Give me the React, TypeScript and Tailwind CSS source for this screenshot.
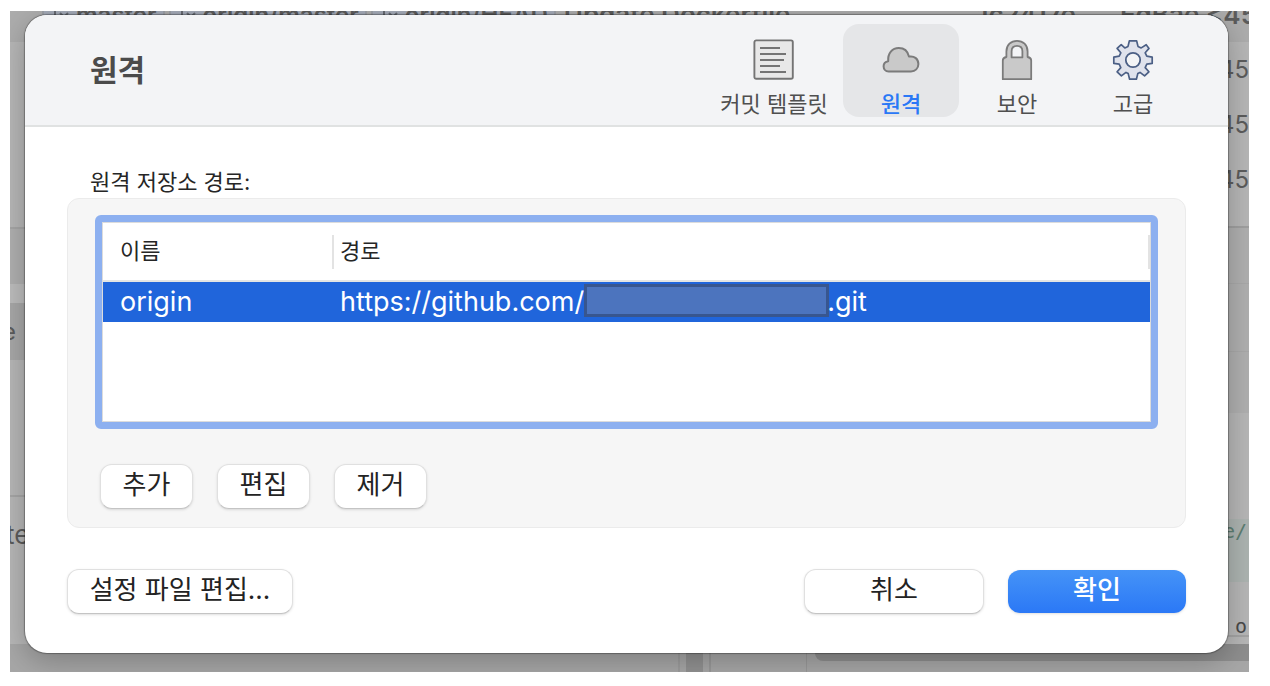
import { useState } from "react";
import type { ReactNode } from "react";

type Tab = { label: string; icon: ReactNode; width: string };

function TemplateIcon() {
  return (
    <svg width="42" height="42" viewBox="0 0 42 42" fill="none" stroke="#747474" aria-hidden="true">
      <rect x="1.4" y="1.4" width="38.4" height="38.4" rx="1.8" fill="#e8e8e8" strokeWidth="1.9" />
      <path d="M7 9h20M7 15h26M7 21h24M7 27h20M7 33h26" strokeWidth="2" />
    </svg>
  );
}

function CloudIcon() {
  return (
    <svg width="42" height="42" viewBox="0 0 42 42" aria-hidden="true">
      <path
        d="M8.6 32.4 C5.4 32.4 3.6 30 3.6 27.2 C3.6 24.6 5.4 22.6 8.2 22.2 C7.6 14.4 12.2 9 18.8 9 C24 9 27.8 12.2 29 17.6 C34.6 16.6 38.4 20.2 38.4 25 C38.4 29.4 35.2 32.4 31 32.4 Z"
        fill="#c9c9c9"
        stroke="#7b7b7b"
        strokeWidth="2"
        strokeLinejoin="round"
      />
    </svg>
  );
}

function LockIcon() {
  return (
    <svg width="42" height="42" viewBox="0 0 42 42" aria-hidden="true">
      <path
        d="M6.8 40.2V21.6Q6.8 18.6 10.4 18V12.4C10.4 5.9 15 1.8 21 1.8S31.6 5.9 31.6 12.4V18Q35.2 18.6 35.2 21.6V40.2Z"
        fill="#c9c9c9"
        stroke="#7b7b7b"
        strokeWidth="1.8"
        strokeLinejoin="round"
      />
      <path
        d="M15.6 18.4V12.2C15.6 8.9 17.8 6.8 21 6.8S26.4 8.9 26.4 12.2V18.4Z"
        fill="#f3f4f6"
        stroke="#7b7b7b"
        strokeWidth="1.8"
        strokeLinejoin="round"
      />
    </svg>
  );
}

function GearIcon() {
  return (
    <svg width="42" height="42" viewBox="0 0 42 42" aria-hidden="true">
      <path
        d="M17.4 1.8H24.6L26 7.4L29.2 8.9L34.2 5.7L37 9.4L33.2 13.8L34.8 17.2L40.2 18.2V24.4L34.8 25.2L33.2 28.6L36.9 32.8L32.6 36.9L28 33.4L25.8 34.6L24.4 40.2H17.6L16.2 34.6L14 33.4L9.4 36.9L5.1 32.8L8.8 28.6L7.2 25.2L1.8 24.4V18.2L7.2 17.2L8.8 13.8L5.1 9.4L9.2 5.7L12.8 8.9L16 7.4Z"
        fill="#dfe2ec"
        stroke="#4b5f85"
        strokeWidth="1.7"
        strokeLinejoin="round"
      />
      <circle cx="21" cy="21" r="7.2" fill="#f3f4f6" stroke="#4b5f85" strokeWidth="1.8" />
    </svg>
  );
}

const tabs: Tab[] = [
  { label: "커밋 템플릿", icon: <TemplateIcon />, width: "w-[138px]" },
  { label: "원격", icon: <CloudIcon />, width: "w-[116px]" },
  { label: "보안", icon: <LockIcon />, width: "w-[116px]" },
  { label: "고급", icon: <GearIcon />, width: "w-[116px]" },
];

function Branch({ name }: { name: string }) {
  return (
    <span className="flex h-6 items-center gap-1.5 border-x-2 border-[#9b9fa6] bg-[#a4abb8] px-1.5">
      <svg width="20" height="24" viewBox="0 0 20 24" fill="none" stroke="#666a72" strokeWidth="2" aria-hidden="true">
        <path d="M5 2v18M5 19c6 0 9-2 9-7" />
        <path d="M10 10l4 4 4-4" />
      </svg>
      {name}
    </span>
  );
}

/* The dimmed repository window that stays visible around the sheet. */
function RepositoryWindow() {
  return (
    <div
      aria-hidden="true"
      className="absolute inset-0 flex flex-col overflow-hidden bg-[#b7b7b7] text-2xl text-[#5c5c5c]"
    >
      <div className="flex h-[31px] shrink-0 items-start justify-between overflow-hidden bg-[#adadad] pl-8 leading-6 font-semibold whitespace-nowrap">
        <div className="-mt-2 flex gap-1">
          <Branch name="master" />
          <Branch name="origin/master" />
          <Branch name="origin/HEAD" />
          <span className="pl-1 text-[26px]">Update Dockerfile</span>
        </div>
        <div className="-mt-2 -mr-2 flex gap-11 text-[26px]">
          <span>1c2417e</span>
          <span>EdBae &lt;45</span>
        </div>
      </div>

      <div className="flex min-h-0 flex-1 justify-between">
        <div className="flex w-8 flex-col overflow-hidden">
          <div className="h-[187px] border-b-2 border-[#a6a6a6]" />
          <div className="h-[55px] bg-[#b0b0b0]" />
          <div className="h-[19px] bg-[#bdbdbd]" />
          <div className="flex h-[57px] items-center bg-[#a8a8a8]">
            <span className="-ml-2">e</span>
          </div>
          <div className="h-[137px] border-b-2 border-[#a6a6a6]" />
          <div className="flex h-[76px] items-center text-[26px]">
            <span className="-ml-1">te</span>
          </div>
        </div>

        <div className="flex w-9 flex-col overflow-hidden">
          <div className="flex h-[186px] flex-col items-end border-b-2 border-[#a0a0a0] leading-[55px]">
            <span>45</span>
            <span>45</span>
            <span>45</span>
          </div>
          <div className="h-[56px] border-b border-[#a9a9a9] bg-[#b0b0b0]" />
          <div className="h-[68px] border-b border-[#a9a9a9] bg-[#b0b0b0]" />
          <div className="h-[61px] bg-[#b0b0b0]" />
          <div className="h-[106px]" />
          <div className="h-[63px] bg-[#adb4b1] pr-0.5 text-right font-['DejaVu_Sans_Mono'] text-xl leading-6 text-[#5d7f73]">
            e/
          </div>
          <div className="h-[55px] border-b-2 border-[#a4a4a4] pr-0.5 text-right font-['DejaVu_Sans_Mono'] text-xl leading-[88px] text-[#4a4a4a]">
            o
          </div>
        </div>
      </div>

      <div className="flex h-7 shrink-0 bg-[#a7a7a7]">
        <div className="flex-1 border-r-2 border-[#9d9d9d]" />
        <div className="w-1.5" />
        <div className="w-[17px] bg-[#929292]" />
        <div className="w-2 border-r-2 border-[#999999]" />
        <div className="w-[96px] border-r border-[#999999]" />
        <div className="w-[442px] pl-2">
          <div className="h-[17px] rounded-bl-lg bg-[#8e8e8e]" />
        </div>
      </div>
    </div>
  );
}

function PushButton({ children, className = "" }: { children: ReactNode; className?: string }) {
  return (
    <button
      type="button"
      className={`h-[45px] rounded-xl border border-[#e0e0e0] border-b-[#c4c4c4] bg-white pb-1 text-[26px] leading-none text-[#232323] shadow-sm ${className}`}
    >
      {children}
    </button>
  );
}

export default function App() {
  const [active, setActive] = useState("원격");

  return (
    <div className="bg-white pt-[11px] pr-[21px] pb-[14px] pl-[10px] font-['Inter','Noto_Sans_CJK_KR',sans-serif]">
      <div className="relative overflow-hidden pt-1 pr-[21px] pb-[19px] pl-[15px]">
        <RepositoryWindow />

        <section
          role="dialog"
          aria-labelledby="sheet-title"
          className="relative overflow-hidden rounded-[22px] bg-white shadow-[0_0_1px_1px_rgba(0,0,0,0.3),0_8px_30px_rgba(0,0,0,0.25)]"
        >
          <header className="flex h-28 items-start justify-between border-b-2 border-[#e0e2e2] bg-[#f3f4f6] pt-[9px] pr-[37px] pl-[65px]">
            <h1 id="sheet-title" className="pt-6 text-[30px] leading-11 font-bold text-[#4b4b4b]">
              원격
            </h1>
            <nav className="flex">
              {tabs.map((tab) => (
                <button
                  key={tab.label}
                  type="button"
                  aria-pressed={active === tab.label}
                  onClick={() => setActive(tab.label)}
                  className={`flex h-[93px] flex-col items-center rounded-2xl pt-[15px] text-[22px] ${tab.width} ${
                    active === tab.label ? "bg-[#e5e6e8] font-medium text-[#2a78f6]" : "text-[#4f4f4f]"
                  }`}
                >
                  {tab.icon}
                  <span className="mt-2.5 leading-[26px] whitespace-nowrap">{tab.label}</span>
                </button>
              ))}
            </nav>
          </header>

          <div className="px-[42px] pt-10 pb-[39px]">
            <h2 id="remotes-label" className="pl-[23px] text-[22px] leading-[31px] text-[#262626]">
              원격 저장소 경로:
            </h2>

            <div className="rounded-xl border border-[#ebebeb] bg-[#f6f6f6] px-[27px] pt-4 pb-[18px]">
              <div className="h-[214px] rounded-md border-[7px] border-[#8db0f0] bg-white">
                <div className="h-full border border-[#dcdcdc]">
                  <table aria-labelledby="remotes-label" className="w-full table-fixed text-left">
                    <thead>
                      <tr className="h-[58px] border-b-2 border-[#e3e5e4] text-[22px] text-[#262626]">
                        <th scope="col" className="w-[229px] p-0 pl-[17px] font-normal">
                          이름
                        </th>
                        <th scope="col" className="p-0 font-normal">
                          <div className="flex h-[34px] items-center border-x-2 border-[#e3e3e3] pl-1.5">경로</div>
                        </th>
                      </tr>
                    </thead>
                    <tbody>
                      <tr className="h-10 bg-[#2065db] text-[27px] leading-10 text-white">
                        <td className="p-0 pl-[17px]">origin</td>
                        <td className="p-0 pl-2">
                          <div className="flex items-center">
                            <span>https://github.com/</span>
                            <span className="-mt-1 h-[33px] w-[245px] border-[3px] border-[#38568f] bg-[#4c74be]" />
                            <span className="-ml-0.5">.git</span>
                          </div>
                        </td>
                      </tr>
                    </tbody>
                  </table>
                </div>
              </div>

              <div className="mt-[35px] flex gap-6 pl-[5px]">
                <PushButton className="w-[93px]">추가</PushButton>
                <PushButton className="w-[93px]">편집</PushButton>
                <PushButton className="w-[93px]">제거</PushButton>
              </div>
            </div>

            <footer className="mt-[41px] flex items-center gap-6">
              <PushButton className="w-[226px]">설정 파일 편집...</PushButton>
              <PushButton className="ml-auto w-[180px]">취소</PushButton>
              <button
                type="button"
                className="h-[43px] w-[178px] rounded-xl bg-linear-to-b from-[#4593f7] to-[#2b78f6] pb-1 text-[26px] leading-none font-medium text-white shadow-sm"
              >
                확인
              </button>
            </footer>
          </div>
        </section>
      </div>
    </div>
  );
}
